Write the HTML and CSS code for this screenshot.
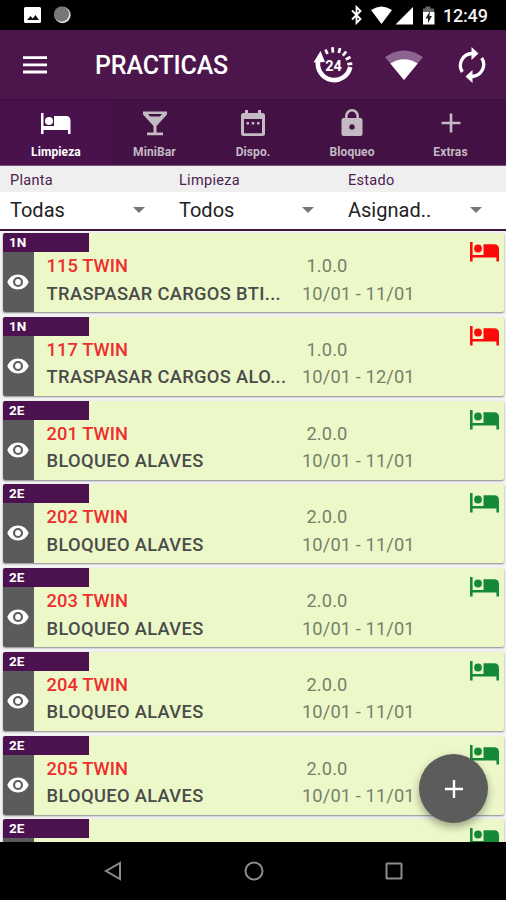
FILE: index.html
```html
<!DOCTYPE html>
<html lang="es">
<head>
<meta charset="utf-8">
<title>Practicas</title>
<link rel="stylesheet" href="styles.css">
</head>
<body>
<svg class="defs" aria-hidden="true">
  <symbol id="bed" viewBox="0 0 29 20">
    <path d="M0 0h2.600v13h26.400v6.600h-2.600v-4.200H2.600v4.200H0z"/>
    <path d="M13.500 2.200h10.500q5 0 5 5v7H13.500z"/>
    <circle cx="8" cy="6.500" r="3.900"/>
  </symbol>
  <symbol id="eye" viewBox="0 0 22 16">
    <path fill-rule="evenodd" d="M11 .5C6 .5 2 3.500.300 8 2 12.500 6 15.500 11 15.500s9-3 10.700-7.500C20 3.500 16 .5 11 .5zM11 3a5 5 0 1 1 0 10 5 5 0 0 1 0-10zm0 2.100a2.900 2.900 0 1 0 0 5.800 2.900 2.900 0 0 0 0-5.800z"/>
  </symbol>
</svg>
<div class="phone">
  <header class="status">
    <svg class="status-left" width="50" height="18" viewBox="0 0 50 18">
      <rect x="0" y="1" width="17" height="16" rx="1.500" fill="#fff"/>
      <path d="M3 14l3.500-4 2.300 2.500L11.500 9l3.500 5z" fill="#111"/>
      <circle cx="38.500" cy="9" r="8.200" fill="#ddd"/><circle cx="37.500" cy="8" r="7.600" fill="#777"/>
    </svg>
    <svg class="status-right" width="88" height="20" viewBox="0 0 88 20">
      <path d="M3 5.500l8.500 8.500-4 4V2l4 4L3 14.500" fill="none" stroke="#fff" stroke-width="1.800"/>
      <path d="M22 5q10.500-7 21 0L32.500 19z" fill="#fff"/>
      <path d="M46.500 19.500L64 2v17.500z" fill="#fff"/>
      <path d="M76.500 1.500h5v2h3.500v4H74v-4h2.500z" fill="#666"/><path d="M74 7h11.500v12.500H74z" fill="#fff"/>
      <path d="M81 6l-4.500 7.500H79v4.500l4-7h-2.500z" fill="#222"/>
    </svg>
    <span class="clock">12:49</span>
  </header>
  <div class="appbar">
    <svg class="menu" width="24" height="18" viewBox="0 0 24 18"><path d="M0 1.700h24M0 8.900h24M0 16h24" stroke="#fff" stroke-width="2.800"/></svg>
    <h1>PRACTICAS</h1>
    <svg class="hours" width="42" height="42" viewBox="0 0 42 42">
      <path d="M5.200 16.500A16.300 16.300 0 1 0 37.200 23" fill="none" stroke="#fff" stroke-width="4.600"/>
      <path d="M.5 18.500L7.500 7l4.500 11z" fill="#fff"/>
      <path d="M12.500 5.500l2 4.500M19.500 3.200l.4 5.500M27 4l-1.200 5M33.200 7.500l-3.400 4.200M37.500 13l-4.700 2.500M39.300 19.600l-5 .6" stroke="#fff" stroke-width="2.700"/>
      <text x="20.500" y="27" text-anchor="middle">24</text>
    </svg>
    <svg class="wifi" width="40" height="32" viewBox="0 0 40 32">
      <path d="M1 8Q20-5 39 8L20 31z" fill="#8d6490"/><path d="M6.300 14.500q14-8.500 27.400 0L20 31z" fill="#fff"/>
    </svg>
    <svg class="sync" width="28" height="36" viewBox="0 0 28 36">
      <path d="M4.300 25A12 12 0 0 1 14 6.500M23.700 11A12 12 0 0 1 14 29.500" fill="none" stroke="#fff" stroke-width="3.300"/>
      <path d="M13.500 0l7 6.500-7 6.500zM14.500 23v13l-7-6.500z" fill="#fff"/>
    </svg>
  </div>
  <nav class="tabs">
    <div class="tab active"><svg width="30" height="30" viewBox="0 0 30 30"><path d="M0 5h2.500v13H13V8h12q4.500 0 4.500 5v13H27v-4H2.500v4H0z"/><circle cx="8" cy="13" r="4"/></svg><span>Limpieza</span></div>
    <div class="tab"><svg width="30" height="30" viewBox="0 0 30 30"><path fill-rule="evenodd" d="M3 3.500h24v3L16.500 18v6.500H23v2.700H7v-2.700h6.500V18L3 6.500zM8 6l2.200 2.500h9.600L22 6z"/></svg><span>MiniBar</span></div>
    <div class="tab"><svg width="30" height="30" viewBox="0 0 30 30"><path fill-rule="evenodd" d="M7 2h3v3h10V2h3v3h1.500q2.500 0 2.500 2.500v18q0 2.500-2.500 2.500h-19Q3 28 3 25.500v-18Q3 5 5.500 5H7zM6 11v14.200h18V11z"/><path d="M8.500 14H11v2.500H8.500zM13.700 14h2.600v2.500h-2.600zM19 14h2.500v2.500H19z"/></svg><span>Dispo.</span></div>
    <div class="tab"><svg width="30" height="30" viewBox="0 0 30 30"><path fill-rule="evenodd" d="M8 10V8a7 7 0 0 1 14 0v2h1.500q2 0 2 2v14q0 2-2 2h-17q-2 0-2-2V12q0-2 2-2zM10.600 10h8.800V8a4.400 4.400 0 0 0-8.800 0zM15 16.200a2.700 2.700 0 1 0 0 5.400 2.700 2.700 0 0 0 0-5.400z"/></svg><span>Bloqueo</span></div>
    <div class="tab"><svg width="30" height="30" viewBox="0 0 30 30"><path d="M13.700 5.500h2.600v8.200h8.200v2.600h-8.200v8.200h-2.600v-8.200H5.500v-2.600h8.200z"/></svg><span>Extras</span></div>
  </nav>
  <section class="filters">
    <div class="filter"><label>Planta</label><div class="select"><span>Todas</span><i></i></div></div>
    <div class="filter"><label>Limpieza</label><div class="select"><span>Todos</span><i></i></div></div>
    <div class="filter"><label>Estado</label><div class="select"><span>Asignad..</span><i></i></div></div>
  </section>
  <main class="list">
    <article class="card"><div class="zone">1N</div><div class="view"><svg><use href="#eye"/></svg></div><div class="guest"><b class="room">115 TWIN</b><b>TRASPASAR CARGOS BTI...</b></div><div class="stay"><span class="pax">1.0.0</span><span>10/01 - 11/01</span></div><svg class="bed busy"><use href="#bed"/></svg></article>
    <article class="card"><div class="zone">1N</div><div class="view"><svg><use href="#eye"/></svg></div><div class="guest"><b class="room">117 TWIN</b><b>TRASPASAR CARGOS ALO...</b></div><div class="stay"><span class="pax">1.0.0</span><span>10/01 - 12/01</span></div><svg class="bed busy"><use href="#bed"/></svg></article>
    <article class="card"><div class="zone">2E</div><div class="view"><svg><use href="#eye"/></svg></div><div class="guest"><b class="room">201 TWIN</b><b>BLOQUEO ALAVES</b></div><div class="stay"><span class="pax">2.0.0</span><span>10/01 - 11/01</span></div><svg class="bed"><use href="#bed"/></svg></article>
    <article class="card"><div class="zone">2E</div><div class="view"><svg><use href="#eye"/></svg></div><div class="guest"><b class="room">202 TWIN</b><b>BLOQUEO ALAVES</b></div><div class="stay"><span class="pax">2.0.0</span><span>10/01 - 11/01</span></div><svg class="bed"><use href="#bed"/></svg></article>
    <article class="card"><div class="zone">2E</div><div class="view"><svg><use href="#eye"/></svg></div><div class="guest"><b class="room">203 TWIN</b><b>BLOQUEO ALAVES</b></div><div class="stay"><span class="pax">2.0.0</span><span>10/01 - 11/01</span></div><svg class="bed"><use href="#bed"/></svg></article>
    <article class="card"><div class="zone">2E</div><div class="view"><svg><use href="#eye"/></svg></div><div class="guest"><b class="room">204 TWIN</b><b>BLOQUEO ALAVES</b></div><div class="stay"><span class="pax">2.0.0</span><span>10/01 - 11/01</span></div><svg class="bed"><use href="#bed"/></svg></article>
    <article class="card"><div class="zone">2E</div><div class="view"><svg><use href="#eye"/></svg></div><div class="guest"><b class="room">205 TWIN</b><b>BLOQUEO ALAVES</b></div><div class="stay"><span class="pax">2.0.0</span><span>10/01 - 11/01</span></div><svg class="bed"><use href="#bed"/></svg></article>
    <article class="card"><div class="zone">2E</div><div class="view"></div><svg class="bed"><use href="#bed"/></svg></article>
    <button class="fab" aria-label="Añadir"><svg width="18" height="18" viewBox="0 0 18 18"><path d="M9 0v18M0 9h18" stroke="#fff" stroke-width="2.400"/></svg></button>
  </main>
  <footer class="navbar">
    <svg width="18" height="20" viewBox="0 0 18 20"><path d="M16 2v16L2 10z"/></svg>
    <svg width="20" height="20" viewBox="0 0 20 20"><circle cx="10" cy="10" r="8.500"/></svg>
    <svg width="18" height="18" viewBox="0 0 18 18"><rect x="1.500" y="1.500" width="15" height="15" rx=".5"/></svg>
  </footer>
</div>
</body>
</html>
```
FILE: styles.css
```css
* { box-sizing: border-box; }
body { margin: 0; font-family: Roboto, "Liberation Sans", sans-serif; }
svg { display: block; flex: none; }
.defs { width: 0; height: 0; display: none; }
.phone { width: 506px; height: 900px; display: flex; flex-direction: column; background: #000; overflow: hidden; }

.status { height: 30px; flex: none; display: flex; align-items: center; padding: 0 19px 0 24px; background: #000; }
.status-right { margin-left: auto; }
.clock { color: #f2f2f2; font-size: 18px; line-height: 22px; font-weight: 500; width: 44px; margin: 2px 0 0 6px; white-space: nowrap; letter-spacing: -.2px; }

.appbar { height: 69px; flex: none; display: flex; align-items: center; padding: 0 20px 0 23px; background: #4c164d; }
.appbar h1 { margin: 3px auto 0 48px; color: #fff; font-size: 25px; line-height: 30px; font-weight: 500; letter-spacing: -.15px; }
.hours { margin-right: 29px; }
.hours text { font-family: Roboto, sans-serif; font-size: 14.5px; font-weight: 700; fill: #fff; }
.wifi { margin-right: 34px; }

.tabs { height: 67px; flex: none; display: grid; grid-template-columns: 112px 85px 112px 86px 111px; background: #441145; border-top: 1px solid #3b0d3c; border-bottom: 1px solid #75557a; }
.tab { display: flex; flex-direction: column; align-items: center; gap: 7px; padding-top: 8px; color: #c3bac4; fill: currentColor; }
.tab span { font-size: 12px; line-height: 15px; font-weight: 700; letter-spacing: .1px; }
.tab.active { color: #fff; background: #4a124c; }

.filters { height: 65px; flex: none; display: grid; grid-template-columns: 169px 169px 168px; border-bottom: 2px solid #3c183f; background: #fff; }
.filter label { display: block; height: 26px; padding-left: 10px; background: #efefef; color: #4c2050; font-size: 14.5px; line-height: 29px; letter-spacing: .3px; }
.select { height: 36px; display: flex; align-items: center; justify-content: space-between; padding: 0 24px 0 10px; color: #222; font-size: 20px; }
.select i { border: 6px solid transparent; border-top-color: #777; border-bottom: 0; }

.list { flex: 1; min-height: 0; overflow: hidden; position: relative; background: #f4f4f4; padding: 2.4px 2px 0 3px; }
.card { position: relative; height: 79px; margin-bottom: 4.7px; display: grid; grid-template: 19px 60px / 31px 268px 1fr; background: #ecf8c8; border-radius: 2px; box-shadow: 0 1px 2px #888; }
.zone { grid-column: 1 / -1; width: 86px; background: #4c114f; color: #fff; padding-left: 6px; font-size: 13.5px; font-weight: 700; line-height: 19px; border-top-left-radius: 2px; }
.view { background: #5b5b5b; display: flex; justify-content: center; padding: 22px 1px 0 0; border-bottom-left-radius: 2px; }
.view svg { width: 22px; height: 16px; fill: #fff; }
.guest, .stay { display: flex; flex-direction: column; font-size: 18.3px; line-height: 27.4px; white-space: nowrap; }
.guest { padding-left: 12.6px; color: #4b4b4b; letter-spacing: .34px; }
.guest b { font-weight: 500; }
.guest .room { color: #ec2e2e; letter-spacing: .08px; }
.stay { color: #77806a; letter-spacing: .1px; }
.stay .pax { padding-left: 4.500px; }
.bed { position: absolute; right: 5px; top: 9px; width: 29px; height: 20px; fill: #158a36; }
.bed.busy { fill: #fd0909; }

.fab { position: absolute; right: 18px; top: 523px; width: 69px; height: 69px; border: 0; border-radius: 50%; padding: 0; display: grid; place-items: center; background: #5c5c5c; box-shadow: 0 4px 8px rgba(0,0,0,.35); }

.navbar { height: 58px; flex: none; display: flex; align-items: center; justify-content: space-between; padding: 0 103px 0 104px; background: #000; }
.navbar svg { fill: none; stroke: #8c8c8c; stroke-width: 2; }
```
